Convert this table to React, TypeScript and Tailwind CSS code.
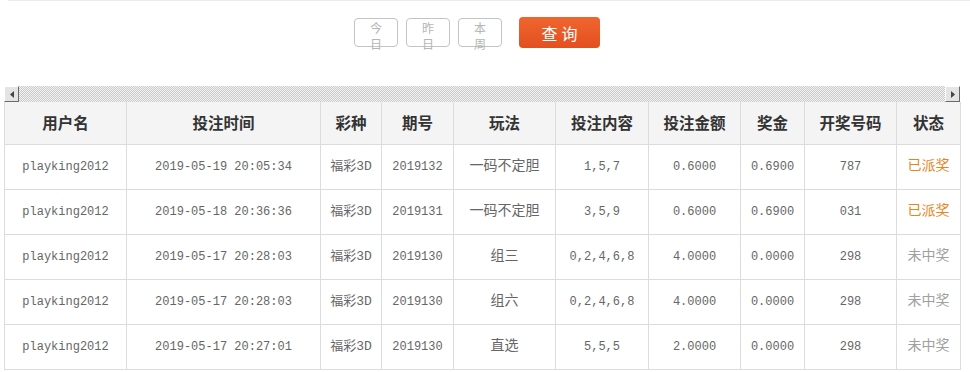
import React from 'react';

const cols = [
  { label: '用户名', w: 'w-[122px]' },
  { label: '投注时间', w: 'w-[194px]' },
  { label: '彩种', w: 'w-[61px]' },
  { label: '期号', w: 'w-[72px]' },
  { label: '玩法', w: 'w-[102px]' },
  { label: '投注内容', w: 'w-[93px]' },
  { label: '投注金额', w: 'w-[92px]' },
  { label: '奖金', w: 'w-[64px]' },
  { label: '开奖号码', w: 'w-[92px]' },
  { label: '状态', w: 'w-[64px]' },
];

const rows = [
  ['playking2012', '2019-05-19 20:05:34', '福彩3D', '2019132', '一码不定胆', '1,5,7', '0.6000', '0.6900', '787', '已派奖'],
  ['playking2012', '2019-05-18 20:36:36', '福彩3D', '2019131', '一码不定胆', '3,5,9', '0.6000', '0.6900', '031', '已派奖'],
  ['playking2012', '2019-05-17 20:28:03', '福彩3D', '2019130', '组三', '0,2,4,6,8', '4.0000', '0.0000', '298', '未中奖'],
  ['playking2012', '2019-05-17 20:28:03', '福彩3D', '2019130', '组六', '0,2,4,6,8', '4.0000', '0.0000', '298', '未中奖'],
  ['playking2012', '2019-05-17 20:27:01', '福彩3D', '2019130', '直选', '5,5,5', '2.0000', '0.0000', '298', '未中奖'],
];

const mono = "font-['Liberation_Mono','Noto_Sans_CJK_SC',monospace]";
const sans = "font-['Noto_Sans_CJK_SC',sans-serif]";

function DayButton({ a, b }: { a: string; b: string }) {
  return (
    <button className={`w-[44px] h-[29px] border border-[#c4c4c4] rounded-[4px] bg-white text-[12px] text-[#b5b5b5] pt-[1px] flex flex-col items-center overflow-visible ${sans}`}>
      <span className="block h-[16px] leading-[16px]">{a}</span>
      <span className="block h-[16px] leading-[16px]">{b}</span>
    </button>
  );
}

export default function App() {
  return (
    <div className="w-[970px] h-[372px] bg-white overflow-hidden">
      <div className="ml-[8px] h-px bg-[#ececec]" />
      {/* search bar */}
      <div className="h-[85px] flex items-start pt-[16px] pl-[354px]">
        <div className="flex gap-[8px] mt-[1px]">
          <DayButton a="今" b="日" />
          <DayButton a="昨" b="日" />
          <DayButton a="本" b="周" />
        </div>
        <button className={`ml-[17px] w-[81px] h-[31px] rounded-[4px] bg-gradient-to-b from-[#f0652f] to-[#e2501f] text-white text-[16px] tracking-[4px] pl-[4px] ${sans}`}>
          查询
        </button>
      </div>

      {/* horizontal scrollbar */}
      <div className="ml-[4px] w-[956px] h-[16px] flex bg-[repeating-conic-gradient(#c9c9c9_0%_25%,#f3f3f3_0%_50%)] bg-[length:2px_2px]">
        <div className="w-[15px] h-[16px] bg-[#e4e4e4] border-t border-l border-white border-r-[#6a6a6a] border-b-[#6a6a6a] border-r border-b flex items-center justify-center">
          <svg width="4" height="7" viewBox="0 0 4 7"><path d="M4 0 L0 3.5 L4 7 Z" fill="#444" /></svg>
        </div>
        <div className="flex-1" />
        <div className="w-[15px] h-[16px] bg-[#e4e4e4] border-t border-l border-white border-r-[#6a6a6a] border-b-[#6a6a6a] border-r border-b flex items-center justify-center">
          <svg width="4" height="7" viewBox="0 0 4 7"><path d="M0 0 L4 3.5 L0 7 Z" fill="#444" /></svg>
        </div>
      </div>

      {/* table */}
      <table className="ml-[4px] w-[957px] table-fixed border-collapse">
        <thead>
          <tr className="h-[42px] bg-[#f4f4f4]">
            {cols.map((c) => (
              <th key={c.label} className={`${c.w} border border-[#dcdcdc] border-t-0 text-[15.5px] font-bold text-[#333] ${sans}`}>
                {c.label}
              </th>
            ))}
          </tr>
        </thead>
        <tbody>
          {rows.map((r, i) => (
            <tr key={i} className="h-[45px]">
              {r.map((v, j) => {
                let color = 'text-[#666]';
                if (j === 9) color = v === '已派奖' ? 'text-[#e5861c]' : 'text-[#a0a0a0]';
                let size = 'text-[12px]';
                if (j === 2) size = 'text-[13px]';
                if (j === 4 || j === 9) size = 'text-[14px]';
                return (
                  <td
                    key={j}
                    className={`border border-[#dcdcdc] text-center ${color} ${mono} ${size}`}
                  >
                    {v}
                  </td>
                );
              })}
            </tr>
          ))}
        </tbody>
      </table>
    </div>
  );
}
